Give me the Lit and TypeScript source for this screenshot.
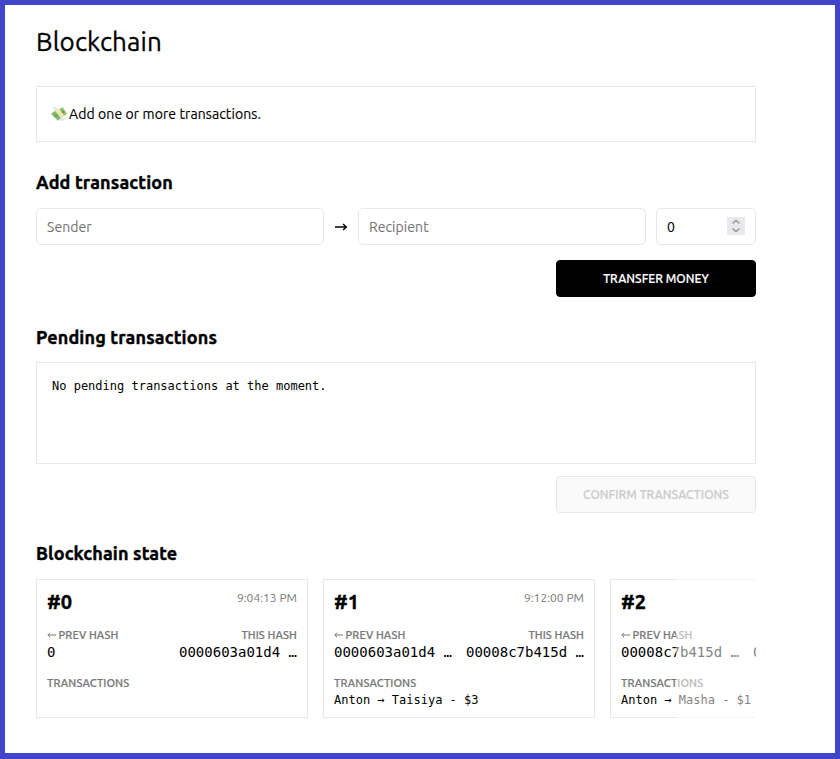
import { LitElement, html, css, svg } from "lit";
import { customElement, property } from "lit/decorators.js";

interface Block {
  index: number;
  time: string;
  prev: string;
  hash: string;
  transactions: string[];
}

const BLOCKS: Block[] = [
  { index: 0, time: "9:04:13 PM", prev: "0", hash: "0000603a01d4 …", transactions: [] },
  { index: 1, time: "9:12:00 PM", prev: "0000603a01d4 …", hash: "00008c7b415d …", transactions: ["Anton → Taisiya - $3"] },
  { index: 2, time: "", prev: "00008c7b415d …", hash: "0000b1f2c07e …", transactions: ["Anton → Masha - $1"] },
];

@customElement("block-card")
export class BlockCard extends LitElement {
  @property({ attribute: false }) block!: Block;

  static styles = css`
    :host {
      display: block;
      box-sizing: border-box;
      flex: 0 0 272px;
      height: 139px;
      padding: 0 10px;
      border: 1px solid #e8e8e8;
      white-space: nowrap;
    }
    .row {
      display: flex;
      justify-content: space-between;
    }
    .head { height: 46px; }
    .index {
      margin: 8px 0 0;
      font-size: 20px;
      font-weight: 700;
      line-height: 28px;
      -webkit-text-stroke: 0.4px;
    }
    .time {
      margin-top: 9px;
      font-size: 12px;
      line-height: 18px;
      color: #777;
    }
    .label {
      font-size: 11px;
      font-weight: 500;
      line-height: 18px;
      letter-spacing: 0.08px;
      color: #777;
      -webkit-text-stroke: 0.2px;
    }
    .back {
      width: 9px;
      height: 6px;
      margin-right: 2.5px;
      vertical-align: 1px;
    }
    .tx-label { margin-top: 14px; }
    .hash {
      font: 14px/16px "DejaVu Sans Mono", monospace;
    }
    .tx {
      font: 12px/16px "DejaVu Sans Mono", monospace;
    }
  `;

  render() {
    const b = this.block;
    return html`
      <div class="row head">
        <h3 class="index">#${b.index}</h3>
        <span class="time">${b.time}</span>
      </div>
      <div class="row">
        <span class="label"><svg class="back" viewBox="0 0 9 6" fill="none" stroke="#777"><path d="M9 3H1M3 .8L.8 3L3 5.2" /></svg>PREV HASH</span>
        <span class="label">THIS HASH</span>
      </div>
      <div class="row">
        <span class="hash">${b.prev}</span>
        <span class="hash">${b.hash}</span>
      </div>
      <div class="label tx-label">TRANSACTIONS</div>
      ${b.transactions.map((t) => html`<div class="tx">${t}</div>`)}
    `;
  }
}

const money = svg`
  <path d="M1 .8L5 1.4L8 4.6L4 4.6ZM8 11L14.4 11.4L12 13.8L9 13.6Z" fill="#dfe5ea"/>
  <path d="M0 7.4L3.6 4.4L10 10.4L6.6 13.8Z" fill="#84bb6e"/>
  <path d="M7.4 3.4L10.6 1L15 7L11.6 10Z" fill="#8cc274"/>
  <path d="M4 4.4L7.6 2.6L12.6 9.4L9.4 11.4Z" fill="#f3e4ae"/>
  <circle cx="4.6" cy="9" r="1.2" fill="#5f9f58"/>
  <circle cx="11.4" cy="5.4" r="1.2" fill="#5f9f58"/>`;

@customElement("app-root")
export class AppRoot extends LitElement {
  static styles = css`
    :host {
      display: block;
      box-sizing: border-box;
      height: 759px;
      padding: 0 79px 0 31px;
      border: 5px solid #4045cb;
      border-bottom-width: 6px;
      background: #fff;
      color: #000;
      font-family: Ubuntu, "Noto Sans", sans-serif;
      overflow: hidden;
    }
    h1 {
      margin: 17px 0 24px;
      font-size: 26px;
      font-weight: 400;
      line-height: 40px;
      letter-spacing: 0.12px;
      -webkit-text-stroke: 0.3px;
    }
    h2 {
      margin: 0;
      font-size: 18px;
      font-weight: 700;
      line-height: 26px;
      letter-spacing: 0.14px;
      -webkit-text-stroke: 0.4px;
    }
    .status {
      box-sizing: border-box;
      display: flex;
      align-items: center;
      height: 56px;
      margin-bottom: 27px;
      padding: 0 14px;
      border: 1px solid #e8e8e8;
      font-size: 14px;
      letter-spacing: 0.09px;
      -webkit-text-stroke: 0.15px;
    }
    .money {
      width: 16px;
      height: 16px;
      margin-right: 2px;
      -webkit-text-stroke: 0;
    }
    .form {
      display: grid;
      grid-template-columns: 288px 34px 288px 100px;
      margin-top: 13px;
    }
    .field {
      box-sizing: border-box;
      height: 37px;
      padding: 0 10px;
      border: 1px solid #e8e8e8;
      border-radius: 5px;
      font-size: 14px;
      line-height: 36px;
      letter-spacing: 0.06px;
      color: #777;
      -webkit-text-stroke: 0.1px;
    }
    .amount {
      display: flex;
      align-items: center;
      justify-content: space-between;
      margin-left: 10px;
      width: 100px;
      color: #000;
    }
    .spin { width: 18px; height: 18px; margin-bottom: 1px; }
    .arrow { width: 14px; height: 10px; place-self: center; }
    .actions { display: flex; justify-content: flex-end; }
    .btn {
      box-sizing: border-box;
      width: 200px;
      height: 37px;
      padding: 0;
      border: 1px solid #000;
      border-radius: 4px;
      background: #000;
      color: #fff;
      font: 500 12px Ubuntu, "Noto Sans", sans-serif;
      letter-spacing: 0.05px;
      -webkit-text-stroke: 0.2px;
    }
    .btn:disabled {
      border-color: #e8e8e8;
      background: #fafafa;
      color: #ccc;
    }
    .add { margin: 15px 0 27px; }
    .pending {
      box-sizing: border-box;
      height: 102px;
      margin: 12px 0 12px;
      padding: 15px;
      border: 1px solid #e8e8e8;
      font: 12px/16px "DejaVu Sans Mono", monospace;
    }
    .confirm { margin-bottom: 27px; }
    .chain {
      position: relative;
      display: flex;
      gap: 15px;
      margin-top: 13px;
      overflow: hidden;
    }
    .fade {
      position: absolute;
      inset: 0 0 0 auto;
      width: 80px;
      background: rgba(255, 255, 255, 0.5);
    }
  `;

  render() {
    return html`
      <h1>Blockchain</h1>
      <div class="status">
        <svg class="money" viewBox="0 0 15 15">${money}</svg>
        <span>Add one or more transactions.</span>
      </div>
      <h2>Add transaction</h2>
      <div class="form">
        <div class="field">Sender</div>
        <svg class="arrow" viewBox="0 0 14 10" fill="none" stroke="#000" stroke-width="1.4">
          <path d="M1 5H12M9 2L12.4 5L9 8" />
        </svg>
        <div class="field">Recipient</div>
        <div class="field amount">
          <span>0</span>
          <svg class="spin" viewBox="0 0 18 18" fill="none" stroke="#94949c" stroke-width="1.5">
            <path d="M0 0H18V18H0Z" fill="#e9e9ed" stroke="none" />
            <path d="M5.5 6.5L9 3.5L12.5 6.5M5.5 11.5L9 14.5L12.5 11.5" />
          </svg>
        </div>
      </div>
      <div class="actions add"><button class="btn">TRANSFER MONEY</button></div>
      <h2>Pending transactions</h2>
      <div class="pending">No pending transactions at the moment.</div>
      <div class="actions confirm"><button class="btn" disabled>CONFIRM TRANSACTIONS</button></div>
      <h2>Blockchain state</h2>
      <div class="chain">
        ${BLOCKS.map((b) => html`<block-card .block=${b}></block-card>`)}
        <div class="fade"></div>
      </div>
    `;
  }
}
